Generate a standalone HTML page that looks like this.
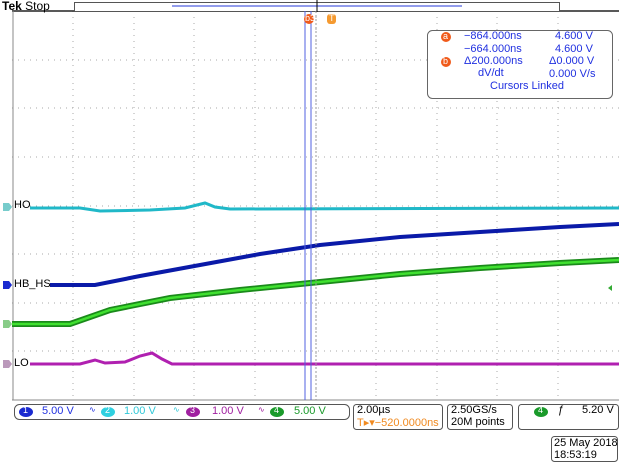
<!DOCTYPE html><html><head><style>
body{margin:0;width:619px;height:465px;background:#fff;position:relative;overflow:hidden;font-family:"Liberation Sans",sans-serif;}
.a{position:absolute}
.t{font-size:11px;white-space:nowrap}
</style></head><body>
<svg class="a" style="left:0;top:0" width="619" height="465">
<g stroke="#aaa" stroke-dasharray="1 5">
<line x1="73" y1="11" x2="73" y2="400"/><line x1="134" y1="11" x2="134" y2="400"/><line x1="194" y1="11" x2="194" y2="400"/><line x1="255" y1="11" x2="255" y2="400"/><line x1="316" y1="11" x2="316" y2="400"/><line x1="376" y1="11" x2="376" y2="400"/><line x1="437" y1="11" x2="437" y2="400"/><line x1="497" y1="11" x2="497" y2="400"/><line x1="558" y1="11" x2="558" y2="400"/>
<line x1="12" y1="60" x2="619" y2="60"/><line x1="12" y1="108" x2="619" y2="108"/><line x1="12" y1="157" x2="619" y2="157"/><line x1="12" y1="206" x2="619" y2="206"/><line x1="12" y1="254" x2="619" y2="254"/><line x1="12" y1="303" x2="619" y2="303"/><line x1="12" y1="351" x2="619" y2="351"/>
</g>
<line x1="12" y1="11" x2="619" y2="11" stroke="#222" stroke-width="1.5"/>
<line x1="13" y1="11" x2="13" y2="400" stroke="#888"/>
<line x1="12" y1="400" x2="619" y2="400" stroke="#888"/>
<rect x="74.5" y="2.5" width="485" height="9" fill="#fff" stroke="#555"/>
<line x1="172" y1="6" x2="462" y2="6" stroke="#5060e0" stroke-width="1.2"/>
<line x1="317" y1="0" x2="317" y2="12" stroke="#000"/>
<polyline fill="none" stroke="#20b8c8" stroke-width="3" points="30,208 80,208 100,211 150,210 185,208 205,203 215,207 230,209 619,208"/>
<polyline fill="none" stroke="#0a1aa8" stroke-width="4" points="50,285 95,285 140,276 200,265 260,254 320,245 400,237 480,232 560,227 619,224"/>
<polyline fill="none" stroke="#1a8a1a" stroke-width="6" points="12,324 70,324 110,310 170,298 240,290 320,282 400,274 480,268 560,263 619,260"/>
<polyline fill="none" stroke="#40e030" stroke-width="2.5" points="12,324 70,324 110,310 170,298 240,290 320,282 400,274 480,268 560,263 619,260"/>
<polyline fill="none" stroke="#b020b0" stroke-width="3" points="30,364 80,364 95,360 105,363 125,362 140,356 152,353 162,359 172,364 619,364"/>
<line x1="305" y1="11" x2="305" y2="400" stroke="#5060e0"/>
<line x1="311" y1="11" x2="311" y2="400" stroke="#5060e0"/>
<line x1="316" y1="11" x2="316" y2="400" stroke="#999" stroke-dasharray="2 2"/>
<rect x="427.5" y="30.5" width="185" height="68" rx="5" fill="#fff" stroke="#666"/>
<circle cx="309" cy="19" r="5" fill="#f05a1a"/><rect x="327" y="14" width="9" height="10" rx="3" fill="#f59a30"/>
<circle cx="446" cy="37" r="5" fill="#f05a1a"/><circle cx="446" cy="62" r="5" fill="#f05a1a"/>
<polygon points="3,203 9,203 12,207 9,211 3,211" fill="#7cc"/>
<polygon points="3,281 9,281 12,285 9,289 3,289" fill="#1a2ad0"/>
<polygon points="3,320 9,320 12,324 9,328 3,328" fill="#8c8"/>
<polygon points="3,360 9,360 12,364 9,368 3,368" fill="#b9b"/>
<polygon points="612,285 608,288 612,291" fill="#3a3"/>
<rect x="14.5" y="404.5" width="335" height="15" rx="5" fill="#fff" stroke="#555"/>
<rect x="353.5" y="404.5" width="89" height="25" rx="3" fill="#fff" stroke="#555"/>
<rect x="447.5" y="404.5" width="65" height="25" rx="3" fill="#fff" stroke="#555"/>
<rect x="518.5" y="404.5" width="100" height="25" rx="3" fill="#fff" stroke="#555"/>
<rect x="551.5" y="436.5" width="66" height="25" rx="3" fill="#fff" stroke="#555"/>
<ellipse cx="26" cy="412" rx="7" ry="5" fill="#1a2ad0"/>
<ellipse cx="108" cy="412" rx="7" ry="5" fill="#30d0e0"/>
<ellipse cx="193" cy="412" rx="7" ry="5" fill="#a020a0"/>
<ellipse cx="277" cy="412" rx="7" ry="5" fill="#1a9a2a"/>
<ellipse cx="541" cy="412" rx="7" ry="5" fill="#1a9a2a"/>
</svg>
<div class="a t" style="left:2px;top:-1px;font-size:12px"><b>Tek</b> Stop</div>
<div class="a t" style="left:305px;top:13px;font-size:9px;color:#fff">b3</div>
<div class="a t" style="left:329px;top:13px;font-size:9px;color:#fff">T</div>
<div class="a t" style="left:443px;top:31px;font-size:9px;color:#fff">a</div>
<div class="a t" style="left:443px;top:56px;font-size:9px;color:#fff">b</div>
<div class="a t" style="color:#2030e0;left:464px;top:30px;line-height:12.5px">−864.000ns<br>−664.000ns<br>Δ200.000ns</div>
<div class="a t" style="color:#2030e0;left:478px;top:67px;line-height:12.5px">dV/dt</div>
<div class="a t" style="color:#2030e0;left:555px;top:30px;line-height:12.5px">4.600 V<br>4.600 V</div>
<div class="a t" style="color:#2030e0;left:549px;top:55px;line-height:12.5px">Δ0.000 V<br>0.000 V/s</div>
<div class="a t" style="color:#2030e0;left:490px;top:80px">Cursors Linked</div>
<div class="a t" style="left:14px;top:199px">HO</div>
<div class="a t" style="left:14px;top:278px">HB_HS</div>
<div class="a t" style="left:14px;top:357px">LO</div>
<div class="a t" style="left:23px;top:405px;font-size:9px;color:#fff">1</div>
<div class="a t" style="left:105px;top:405px;font-size:9px;color:#fff">2</div>
<div class="a t" style="left:190px;top:405px;font-size:9px;color:#fff">3</div>
<div class="a t" style="left:274px;top:405px;font-size:9px;color:#fff">4</div>
<div class="a t" style="left:538px;top:405px;font-size:9px;color:#fff">4</div>
<div class="a t" style="left:42px;top:405px;color:#2030e0">5.00 V</div>
<div class="a t" style="left:89px;top:405px;color:#2030e0;font-size:8px">∿</div>
<div class="a t" style="left:124px;top:405px;color:#30c8d8">1.00 V</div>
<div class="a t" style="left:173px;top:405px;color:#30c8d8;font-size:8px">∿</div>
<div class="a t" style="left:212px;top:405px;color:#a020a0">1.00 V</div>
<div class="a t" style="left:258px;top:405px;color:#a020a0;font-size:8px">∿</div>
<div class="a t" style="left:294px;top:405px;color:#1a9a2a">5.00 V</div>
<div class="a t" style="left:357px;top:404px">2.00µs</div>
<div class="a t" style="left:357px;top:416px;color:#f08a20">T▸▾−520.0000ns</div>
<div class="a t" style="left:451px;top:404px;line-height:12px">2.50GS/s<br>20M points</div>
<div class="a t" style="left:558px;top:404px">ƒ</div>
<div class="a t" style="left:582px;top:404px">5.20 V</div>
<div class="a t" style="left:554px;top:437px;line-height:12px">25 May 2018<br>18:53:19</div>
</body></html>
